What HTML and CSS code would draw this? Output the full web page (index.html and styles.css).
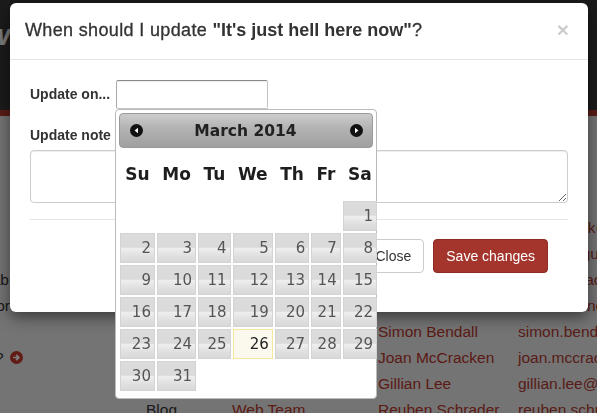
FILE: index.html
```html
<!DOCTYPE html>
<html lang="en">
<head>
<meta charset="utf-8">
<title>Update schedule</title>
<link rel="stylesheet" href="styles.css">
</head>
<body>
  <div class="page">
    <header class="navbar"><span class="brand">Review</span></header>
    <div class="redbar"></div>
    <main class="content">
      <div class="row"></div>
      <div class="row"></div>
      <div class="row"></div>
      <div class="row"><span class="email">anna.brook@example.com</span></div>
      <div class="row"><span class="email">sarah.mcguire@example.com</span></div>
      <div class="row"><span class="side side-a">Collab</span><span class="email">kevin.wallace@example.com</span></div>
      <div class="row"><span class="side side-b">Editor</span><span class="email">karen.dunne@example.com</span></div>
      <div class="row"><span class="name">Simon Bendall</span><span class="email">simon.bendall@example.com</span></div>
      <div class="row"><span class="side side-c">Help? <svg class="go" width="13" height="13" viewBox="0 0 13 13"><circle cx="6.5" cy="6.5" r="6.5" fill="#c0392b"/><path d="M3.2 6.5h5.2M6.2 3.9l2.6 2.6-2.6 2.6" stroke="#fff" stroke-width="1.7" fill="none"/></svg></span><span class="name">Joan McCracken</span><span class="email">joan.mccracken@example.com</span></div>
      <div class="row"><span class="name">Gillian Lee</span><span class="email">gillian.lee@example.com</span></div>
      <div class="row"><span class="cat">Blog</span><span class="team">Web Team</span><span class="name">Reuben Schrader</span><span class="email">reuben.schrader@example.com</span></div>
    </main>
  </div>

  <div class="backdrop"></div>

  <div class="modal">
    <div class="modal-header">
      <h4 class="modal-title">When should I update <strong>"It's just hell here now"</strong>?</h4>
      <span class="close">×</span>
    </div>
    <div class="modal-body">
      <div class="field-row">
        <label class="lbl" for="upd">Update on...</label>
        <input id="upd" class="date-input" type="text">
      </div>
      <label class="lbl lbl-note" for="note">Update note</label>
      <textarea id="note" class="note"></textarea>
      <hr class="sep">
      <div class="modal-footer">
        <button class="btn btn-default" type="button">Close</button>
        <button class="btn btn-primary" type="button">Save changes</button>
      </div>
    </div>
  </div>

  <div class="datepicker">
    <div class="dp-header">
      <svg class="dp-nav" width="13" height="13" viewBox="0 0 13 13"><circle cx="6.5" cy="6.5" r="6.5" fill="#111"/><polygon points="8,3.8 4.6,6.5 8,9.2" fill="#fff"/></svg>
      <span class="dp-title">March 2014</span>
      <svg class="dp-nav" width="13" height="13" viewBox="0 0 13 13"><circle cx="6.5" cy="6.5" r="6.5" fill="#111"/><polygon points="5,3.8 8.4,6.5 5,9.2" fill="#fff"/></svg>
    </div>
    <table class="dp-table">
      <thead>
        <tr><th>Su</th><th>Mo</th><th>Tu</th><th>We</th><th>Th</th><th>Fr</th><th>Sa</th></tr>
      </thead>
      <tbody>
        <tr><td></td><td></td><td></td><td></td><td></td><td></td><td><span class="day">1</span></td></tr>
        <tr><td><span class="day">2</span></td><td><span class="day">3</span></td><td><span class="day">4</span></td><td><span class="day">5</span></td><td><span class="day">6</span></td><td><span class="day">7</span></td><td><span class="day">8</span></td></tr>
        <tr><td><span class="day">9</span></td><td><span class="day">10</span></td><td><span class="day">11</span></td><td><span class="day">12</span></td><td><span class="day">13</span></td><td><span class="day">14</span></td><td><span class="day">15</span></td></tr>
        <tr><td><span class="day">16</span></td><td><span class="day">17</span></td><td><span class="day">18</span></td><td><span class="day">19</span></td><td><span class="day">20</span></td><td><span class="day">21</span></td><td><span class="day">22</span></td></tr>
        <tr><td><span class="day">23</span></td><td><span class="day">24</span></td><td><span class="day">25</span></td><td><span class="day today">26</span></td><td><span class="day">27</span></td><td><span class="day">28</span></td><td><span class="day">29</span></td></tr>
        <tr><td><span class="day">30</span></td><td><span class="day">31</span></td><td></td><td></td><td></td><td></td><td></td></tr>
      </tbody>
    </table>
  </div>
</body>
</html>
```

FILE: styles.css
```css
html, body {
  margin: 0;
  padding: 0;
}
body {
  width: 597px;
  height: 413px;
  overflow: hidden;
  position: relative;
  font-family: "Liberation Sans", Arial, sans-serif;
  background: #e8e8e8;
}

/* ---------- background page ---------- */
.navbar {
  height: 110px;
  background: #363636;
  overflow: hidden;
}
.brand {
  display: block;
  width: 140px;
  margin-left: -130px;
  padding-top: 18px;
  text-align: right;
  font-size: 30px;
  line-height: 34px;
  font-weight: bold;
  font-style: italic;
  color: #f2f2f2;
}
.redbar {
  height: 6px;
  background: #b4382e;
}
.content {
  margin-left: -110px;
  padding-top: 21px;
  width: 900px;
  font-size: 15.5px;
}
.row {
  display: grid;
  grid-template-columns: 134px 122px 86px 146px 140px 240px;
  height: 26px;
  line-height: 26px;
  white-space: nowrap;
}
.side {
  grid-column: 1;
  text-align: right;
  color: #333;
}
.side-a { padding-right: 15px; }
.side-b { padding-right: 14px; }
.side-c { padding-right: 1px; }
.go { vertical-align: -1px; margin-left: 2px; }
.cat { grid-column: 3; color: #333; }
.team { grid-column: 4; color: #b8352b; }
.name { grid-column: 5; color: #b8352b; }
.email { grid-column: 6; color: #b03a31; }

.backdrop {
  position: fixed;
  inset: 0;
  background: rgba(0, 0, 0, 0.5);
}

/* ---------- modal ---------- */
.modal {
  position: absolute;
  top: 3px;
  left: 10px;
  width: 578px;
  background: #fff;
  border-radius: 6px;
  box-shadow: 0 5px 15px rgba(0, 0, 0, 0.5);
  color: #333;
}
.modal-header {
  display: flex;
  justify-content: space-between;
  align-items: center;
  padding: 15px;
  border-bottom: 1px solid #e5e5e5;
}
.modal-title {
  margin: 0;
  font-size: 18px;
  line-height: 25.7px;
  font-weight: normal;
  letter-spacing: 0.35px;
  -webkit-text-stroke: 0.3px #333;
  color: #333;
}
.modal-title strong {
  font-weight: bold;
  letter-spacing: 0;
  -webkit-text-stroke: 0;
}
.close {
  font-size: 21px;
  font-weight: bold;
  line-height: 1;
  color: #000;
  opacity: 0.2;
  margin: -3px 4px 0 0;
}
.modal-body {
  padding: 20px 20px 39px;
}
.field-row {
  display: flex;
  align-items: center;
  gap: 6px;
}
.lbl {
  font-size: 14px;
  line-height: 20px;
  font-weight: bold;
  color: #333;
}
.date-input {
  box-sizing: border-box;
  width: 152px;
  height: 29px;
  margin: 0;
  border: 1px solid #c4c4c4;
  border-top-color: #8a8a8a;
  border-left-color: #aaa;
  border-radius: 2px;
  box-shadow: inset 0 1px 1px rgba(0, 0, 0, 0.08);
  background: #fff;
}
.lbl-note {
  display: block;
  margin-top: 16px;
}
.note {
  display: block;
  box-sizing: border-box;
  width: 100%;
  height: 53px;
  margin: 5px 0 0;
  border: 1px solid #ccc;
  border-radius: 4px;
  box-shadow: inset 0 1px 1px rgba(0, 0, 0, 0.075);
}
.sep {
  margin: 16px 0 0;
  border: 0;
  border-top: 1px solid #e5e5e5;
}
.modal-footer {
  display: flex;
  justify-content: flex-end;
  gap: 9px;
  padding: 19px 20px 0 0;
}
.btn {
  font-family: "Liberation Sans", Arial, sans-serif;
  font-size: 14px;
  line-height: 20px;
  padding: 6px 12px;
  border: 1px solid transparent;
  border-radius: 4px;
  margin: 0;
}
.btn-default {
  background: #fff;
  border-color: #ccc;
  color: #333;
}
.btn-primary {
  background: #a3352c;
  border-color: #8e2b23;
  color: #fff;
}

/* ---------- datepicker ---------- */
.datepicker {
  position: absolute;
  top: 109px;
  left: 115px;
  width: 254px;
  padding: 3px;
  background: #fff;
  border: 1px solid #bbb;
  border-radius: 4px;
  font-family: "DejaVu Sans", Verdana, sans-serif;
}
.dp-header {
  display: grid;
  grid-template-columns: auto 1fr auto;
  align-items: center;
  height: 33px;
  padding: 0 9px 0 10px;
  border: 1px solid #9a9a9a;
  border-radius: 4px;
  background: linear-gradient(to bottom, #cdcdcd 0%, #b4b4b4 40%, #a6a6a6 80%, #a0a0a0 100%);
}
.dp-nav { display: block; }
.dp-title {
  text-align: center;
  font-size: 15.5px;
  font-weight: bold;
  color: #222;
  padding-right: 2px;
}
.dp-table {
  border-collapse: collapse;
  width: 100%;
  margin: 0 0 3px;
}
.dp-table th {
  padding: 15px 6.3px;
  line-height: 22px;
  font-size: 17px;
  font-weight: bold;
  color: #1e1e1e;
  text-align: center;
}
.dp-table td {
  padding: 1px;
}
.day {
  display: block;
  border: 1px solid #d3d3d3;
  background: linear-gradient(to bottom, #dcdcdc 0%, #dadada 47%, #eeeeee 52%, #e3e3e3 72%, #d8d8d8 100%);
  color: #555;
  font-size: 15px;
  line-height: 28px;
  text-align: right;
  padding: 0 3px 0 0;
}
.day.today {
  border-color: #f5e6a0;
  background: #fbf9ee;
  color: #222;
}
```
